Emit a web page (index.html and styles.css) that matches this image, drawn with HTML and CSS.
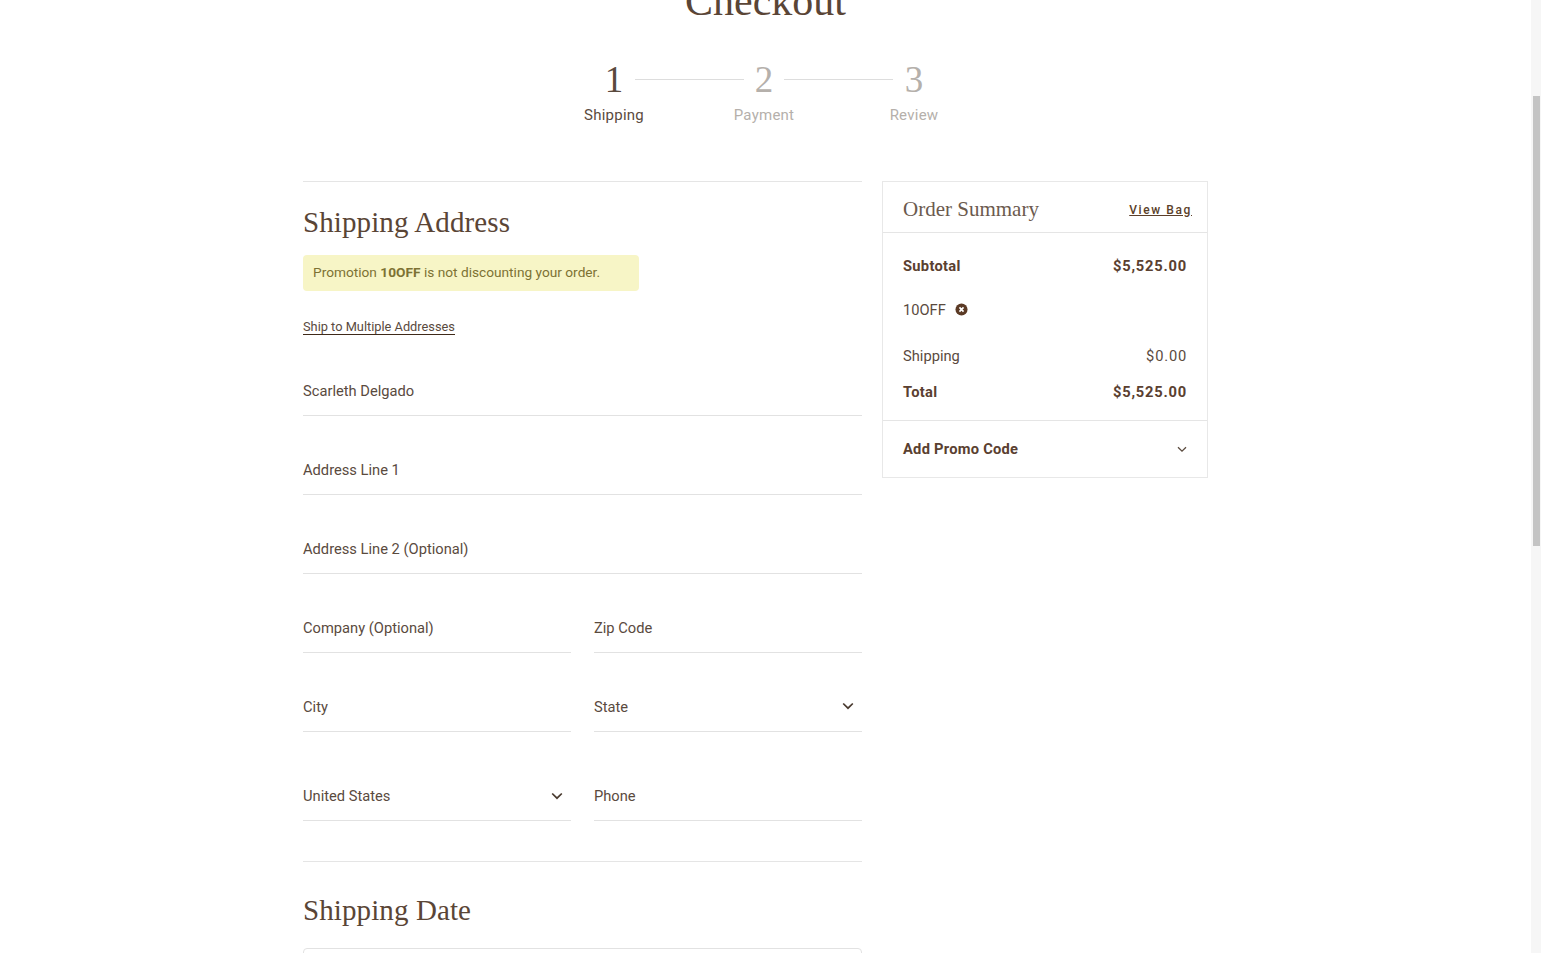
FILE: index.html
```html
<!DOCTYPE html>
<html lang="en">
<head>
    <meta charset="UTF-8">
    <meta name="viewport" content="width=device-width, initial-scale=1.0">
    <title>Checkout</title>
    <link rel="stylesheet" href="styles.css">
</head>
<body>
    <div class="page">
        <h1 class="page-title">Checkout</h1>

        <ol class="steps">
            <li class="step active"><span class="step-num">1</span><span class="step-label">Shipping</span></li>
            <li class="step-line"></li>
            <li class="step"><span class="step-num">2</span><span class="step-label">Payment</span></li>
            <li class="step-line last"></li>
            <li class="step"><span class="step-num">3</span><span class="step-label">Review</span></li>
        </ol>

        <div class="checkout">
            <form class="checkout-form">
                <h2 class="section-title">Shipping Address</h2>
                <div class="notice">Promotion <b>10OFF</b> is not discounting your order.</div>
                <a class="multi-link" href="#">Ship to Multiple Addresses</a>

                <div class="field first">Scarleth Delgado</div>
                <div class="field">Address Line 1</div>
                <div class="field">Address Line 2 (Optional)</div>
                <div class="field-row">
                    <div class="field">Company (Optional)</div>
                    <div class="field">Zip Code</div>
                </div>
                <div class="field-row">
                    <div class="field">City</div>
                    <div class="field select">State
                        <svg class="chev" viewBox="0 0 12 8" width="12" height="8"><path d="M1.2 1.5 6 6.2l4.8-4.7" fill="none" stroke="#4a3b30" stroke-width="1.7"/></svg>
                    </div>
                </div>
                <div class="field-row tall">
                    <div class="field select">United States
                        <svg class="chev" viewBox="0 0 12 8" width="12" height="8"><path d="M1.2 1.5 6 6.2l4.8-4.7" fill="none" stroke="#4a3b30" stroke-width="1.7"/></svg>
                    </div>
                    <div class="field">Phone</div>
                </div>

                <div class="date-section">
                    <h2 class="section-title">Shipping Date</h2>
                    <div class="date-box"></div>
                </div>
            </form>

            <aside class="summary">
                <div class="summary-head">
                    <h3 class="summary-title">Order Summary</h3>
                    <a class="view-bag" href="#">View Bag</a>
                </div>
                <div class="summary-body">
                    <div class="line strong subtotal"><span>Subtotal</span><span class="money">$5,525.00</span></div>
                    <div class="line promo"><span>10OFF</span>
                        <svg class="remove" viewBox="0 0 14 14" width="13" height="13"><circle cx="7" cy="7" r="6.5" fill="#5b3a25"/><path d="M4.8 4.8l4.4 4.4M9.2 4.8l-4.4 4.4" stroke="#fff" stroke-width="1.8"/></svg>
                    </div>
                    <div class="line shipping"><span>Shipping</span><span class="money">$0.00</span></div>
                    <div class="line strong total"><span>Total</span><span class="money">$5,525.00</span></div>
                </div>
                <div class="summary-promo">
                    <span>Add Promo Code</span>
                    <svg viewBox="0 0 10 7" width="10" height="7"><path d="M1 1.2 5 5.2l4-4" fill="none" stroke="#5a4a3e" stroke-width="1.3"/></svg>
                </div>
            </aside>
        </div>
    </div>
    <div class="scrollbar"><div class="scroll-thumb"></div></div>
</body>
</html>
```

FILE: styles.css
```css
html, body {
    height: 953px;
    margin: 0;
    overflow: hidden;
}

body {
    display: flex;
    background-color: #ffffff;
    color: #5a4a3e;
    font-family: Roboto, 'Liberation Sans', sans-serif;
    font-size: 14.7px;
}

.page {
    flex: 1;
    min-width: 0;
    padding-right: 20px;
}

.page-title {
    margin: -25px 0 0 20px;
    height: 52px;
    color: #5a4536;
    font-family: 'Liberation Serif', serif;
    font-size: 42px;
    font-weight: 400;
    line-height: 52px;
    text-align: center;
}

/* steps */
.steps {
    display: flex;
    justify-content: center;
    margin: 34px 0 0 17px;
    padding: 0;
    list-style: none;
}

.step {
    display: flex;
    flex-direction: column;
    align-items: center;
    width: 80px;
    color: #b5b0ab;
}

.step.active {
    color: #5a4a3e;
}

.step-num {
    font-family: 'Liberation Serif', serif;
    font-size: 37px;
    line-height: 38px;
}

.step-label {
    margin-top: 7px;
    font-size: 15px;
    letter-spacing: 0.25px;
    line-height: 18px;
}

.step-line {
    width: 109px;
    height: 1px;
    margin: 18px -20px 0 -19px;
    background-color: #dddddd;
}

.step-line.last {
    margin: 18px -19px 0 -20px;
}

/* two columns */
.checkout {
    display: flex;
    gap: 20px;
    width: 905px;
    margin: 57px auto 0;
}

.checkout-form {
    width: 559px;
    border-top: 1px solid #e5e5e5;
}

.section-title {
    margin: 0;
    padding-top: 22px;
    color: #5a4536;
    font-family: 'Liberation Serif', serif;
    font-size: 29px;
    font-weight: 400;
    letter-spacing: 0.1px;
    line-height: 36px;
}

.notice {
    width: 326px;
    height: 36px;
    margin-top: 15px;
    padding-left: 10px;
    background-color: #f7f5c6;
    border-radius: 4px;
    color: #7d7233;
    font-size: 13.7px;
    line-height: 35px;
}

.multi-link {
    display: inline-block;
    margin-top: 28px;
    border-bottom: 1px solid #3f2a1a;
    color: #5a4a3e;
    font-size: 12.8px;
    line-height: 15px;
    text-decoration: none;
}

.field {
    position: relative;
    height: 78px;
    padding-top: 43px;
    box-sizing: border-box;
    border-bottom: 1px solid #e2e2e2;
    margin-top: 1px;
    line-height: 20px;
}

.field.first {
    margin-top: 3px;
}

.field-row {
    display: grid;
    grid-template-columns: 268px 268px;
    gap: 23px;
}

.field-row.tall .field {
    height: 88px;
    padding-top: 53px;
}

.chev {
    position: absolute;
    right: 8px;
    top: 48px;
}

.field-row.tall .chev {
    right: 8px;
    top: 59px;
}

.date-section {
    margin-top: 40px;
    border-top: 1px solid #e5e5e5;
}

.date-section .section-title {
    padding-top: 30px;
}

.date-box {
    height: 40px;
    margin-top: 20px;
    border: 1px solid #e2e2e2;
    border-radius: 4px;
}

/* order summary */
.summary {
    width: 326px;
    height: 297px;
    box-sizing: border-box;
    border: 1px solid #e8e8e8;
}

.summary-head {
    display: flex;
    justify-content: space-between;
    align-items: center;
    height: 50px;
    padding: 0 15px 0 20px;
    border-bottom: 1px solid #e5e5e5;
}

.summary-title {
    margin: 5px 0 0;
    color: #6b5a4e;
    font-family: 'Liberation Serif', serif;
    font-size: 21px;
    font-weight: 400;
}

.view-bag {
    margin-top: 5px;
    color: #5b3f2a;
    font-size: 12px;
    font-weight: 500;
    letter-spacing: 1.6px;
}

.summary-body {
    height: 187px;
    padding: 0 20px;
    border-bottom: 1px solid #e5e5e5;
}

.line {
    display: flex;
    justify-content: space-between;
    line-height: 20px;
}

.line.strong {
    color: #5a4030;
    font-weight: 700;
    letter-spacing: 0.3px;
}

.money {
    letter-spacing: 0.8px;
}

.subtotal {
    padding-top: 23px;
}

.line.promo {
    justify-content: flex-start;
    align-items: center;
    gap: 9px;
    margin-top: 24px;
}

.remove {
    margin-top: -2px;
}

.shipping {
    margin-top: 26px;
}

.total {
    margin-top: 16px;
}

.summary-promo {
    display: flex;
    justify-content: space-between;
    align-items: center;
    height: 56px;
    padding: 0 20px;
    color: #5a4030;
    font-weight: 700;
    letter-spacing: 0.25px;
}

/* fake page scrollbar, the shot was taken scrolled down */
.scrollbar {
    flex: none;
    width: 10px;
    height: 953px;
    background-color: #f6f6f6;
}

.scroll-thumb {
    width: 7px;
    height: 450px;
    margin: 96px 0 0 2px;
    background-color: #c4c4c4;
}
```
